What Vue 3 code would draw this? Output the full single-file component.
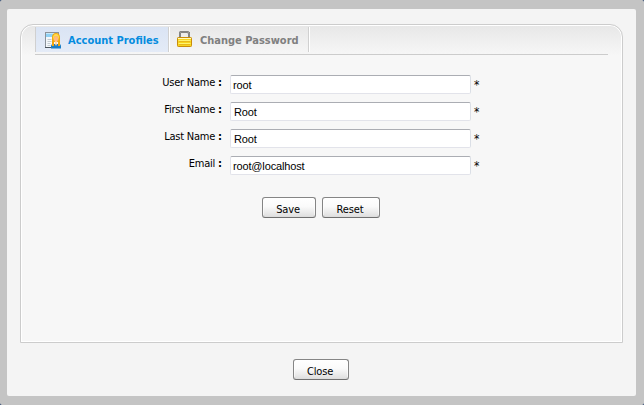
<script setup>
import { ref } from 'vue'

const fields = ref([
  { id: 'user', label: 'User Name', value: 'root' },
  { id: 'first', label: 'First Name', value: 'Root' },
  { id: 'last', label: 'Last Name', value: 'Root' },
  { id: 'email', label: 'Email', value: 'root@localhost' },
])
</script>

<template>
  <div class="frame">
    <main class="dialog">
      <section class="panel">
        <nav class="tabs">
          <a class="tab active">
            <svg class="icon" width="17" height="17" viewBox="0 0 17 17">
              <rect x="0.5" y="0.5" width="13" height="15" fill="#f4f7fa" stroke="#8a9199" />
              <path d="M1 1h12v4H1z" fill="#8fd0f3" />
              <path d="M1 1h12v1H1z" fill="#c5e8fa" />
              <path d="M2.5 7.5h4M2.5 9.5h4M2.5 11.5h3M2.5 13.5h3" stroke="#c3cbd1" />
              <path d="M0 15.5h7" stroke="#4c545c" />
              <path d="M6 16.5V14Q6 12 8 12h6Q16 12 16 14V16.5Z" fill="#1b7dc5" />
              <path d="M7 14V5.5Q7 1 11 1T15 5.5V14H13V10H9V14Z" fill="#f2a60c" />
              <path d="M8 9V5Q8.4 2 11 2T14 5V9L13 5L11 4L9 5Z" fill="#ffdc4c" />
              <path d="M9 5.5Q9 4 11 4T13 5.5V8Q12.5 10 11 10T9 8Z" fill="#ffb982" />
              <path d="M10 9.5h2v2.5L11 14L10 12Z" fill="#ffd8b0" />
            </svg>
            <span class="caption profile">Account Profiles</span>
          </a>
          <a class="tab">
            <svg class="icon lock" width="15" height="16" viewBox="0 0 15 16">
              <path d="M3 7V2Q3 1 4 1h6Q11 1 12 2V7" fill="none" stroke="#666" stroke-width="2" />
              <path d="M3 7V2Q3 1 4 1h6Q11 1 12 2V7" fill="none" stroke="#bdbdbd" stroke-width="0.7" />
              <rect x="0.5" y="6.5" width="14" height="9" rx="0.8" fill="#f7d51d" stroke="#c98c0a" />
              <path d="M1 7.5h13" stroke="#fffac0" />
              <path d="M1.5 9.5h12M1.5 12.5h12" stroke="#fff36f" />
              <path d="M2 10.5h11M2 13.5h11" stroke="#eab81a" />
            </svg>
            <span class="caption password">Change Password</span>
          </a>
        </nav>
        <form class="form" @submit.prevent>
          <div v-for="f in fields" :key="f.id" class="row">
            <label class="label" :for="f.id">{{ f.label }} <b class="colon">:</b></label>
            <input :id="f.id" v-model="f.value" class="input" :class="{ capital: f.value[0] === 'R' }" type="text" />
            <span class="star">*</span>
          </div>
          <div class="actions">
            <button class="button save" type="button">Save</button>
            <button class="button reset" type="button">Reset</button>
          </div>
        </form>
      </section>
      <button class="button close" type="button">Close</button>
    </main>
  </div>
</template>

<style>
body {
  margin: 0;
  background: #173566;
}
</style>

<style scoped>
.frame {
  box-sizing: border-box;
  width: 644px;
  height: 405px;
  padding: 9px 8px 9px 7px;
  background: #c4c4c4;
  border-radius: 2px;
  font-family: "DejaVu Sans Condensed", "DejaVu Sans", sans-serif;
  font-size: 11px;
  color: #000;
}
.dialog {
  box-sizing: border-box;
  height: 387px;
  padding: 15px 13px 0;
  background: #f4f4f4;
  border-radius: 2px;
  display: flex;
  flex-direction: column;
  align-items: center;
}
.panel {
  box-sizing: border-box;
  width: 603px;
  height: 319px;
  border: 1px solid #ccc;
  border-radius: 13px 13px 0 0;
  box-shadow: inset 0 0 0 1px #fff;
  background: linear-gradient(#e7e7e7 0, #f7f7f7 31px);
  padding: 2px 14px 0;
}
.tabs {
  box-sizing: border-box;
  height: 28px;
  border-bottom: 1px solid #ccc;
  display: flex;
}
.tab {
  box-sizing: border-box;
  width: 140px;
  height: 25px;
  padding-left: 8px;
  display: flex;
  align-items: center;
  border-right: 1px solid #d0d0d0;
  box-shadow: 1px 0 #fff;
  color: #808080;
  font-weight: bold;
}
.tab.active {
  width: 134px;
  padding-left: 9px;
  border-left: 1px solid #d0d0d0;
  background: linear-gradient(#dae4f4, #e4ebf7);
  color: #058cdf;
}
.icon {
  flex: none;
  margin-top: 2px;
}
.lock {
  margin-top: -1px;
}
.caption {
  white-space: nowrap;
  line-height: 16px;
  padding-top: 2px;
}
.profile {
  margin-left: 6px;
}
.password {
  margin-left: 8px;
}
.form {
  padding-top: 20px;
}
.row {
  display: flex;
  height: 27px;
}
.label {
  width: 187px;
  text-align: right;
  line-height: 15px;
  white-space: nowrap;
  letter-spacing: -0.22px;
}
.colon {
  letter-spacing: 0;
}
.input {
  box-sizing: border-box;
  width: 241px;
  height: 19px;
  margin: 0 0 0 8px;
  padding: 1px 2px 0;
  border: 1px solid #e2e3ea;
  border-top-color: #abadb3;
  border-right-color: #dbdfe6;
  border-radius: 2px;
  background: #fff;
  font: 11px "Liberation Sans", Arial, sans-serif;
  letter-spacing: -0.15px;
  color: #000;
  outline: none;
}
.capital {
  padding-left: 3px;
}
.star {
  margin-left: 3px;
  font-size: 12px;
  line-height: 20px;
}
.actions {
  display: flex;
  gap: 6px;
  padding: 14px 0 0 227px;
}
.button {
  box-sizing: border-box;
  height: 21px;
  margin: 0;
  padding: 4px 2px 0 0;
  border: 1px solid #858585;
  border-bottom-color: #707070;
  border-radius: 3px;
  background: linear-gradient(#fff 0, #fafafa 45%, #dedede 100%);
  box-shadow: inset 0 0 0 1px rgba(255, 255, 255, 0.6), inset 0 -1px #aaa;
  font: 11px/14px "DejaVu Sans Condensed", "DejaVu Sans", sans-serif;
  letter-spacing: -0.15px;
  color: #000;
}
.save {
  width: 54px;
}
.reset {
  width: 58px;
}
.close {
  width: 56px;
  margin: 16px 1px 0 0;
}
</style>
